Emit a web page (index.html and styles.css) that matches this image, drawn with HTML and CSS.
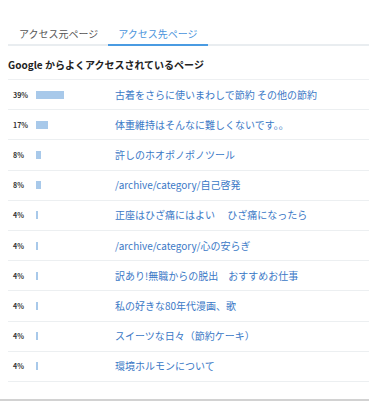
FILE: index.html
```html
<!DOCTYPE html>
<html lang="ja">
<head>
  <meta charset="UTF-8" />
  <title>アクセス先ページ</title>
  <link rel="stylesheet" href="styles.css">
</head>
<body>

  <div class="panel">
    <div class="contenido">
      <div class="tabs">
        <div class="tab">アクセス元ページ</div>
        <div class="tab activo">アクセス先ページ</div>
      </div>

      <h2 class="titulo">Google からよくアクセスされているページ</h2>

      <ul class="lista">
        <li class="fila"><span class="pct">39%</span><span class="barra-col"><span class="barra" style="width: 28px"></span></span><a href="#">古着をさらに使いまわしで節約 その他の節約</a></li>
        <li class="fila"><span class="pct">17%</span><span class="barra-col"><span class="barra" style="width: 12px"></span></span><a href="#">体重維持はそんなに難しくないです。。</a></li>
        <li class="fila"><span class="pct">8%</span><span class="barra-col"><span class="barra" style="width: 5px"></span></span><a href="#">許しのホオポノポノツール</a></li>
        <li class="fila"><span class="pct">8%</span><span class="barra-col"><span class="barra" style="width: 5px"></span></span><a href="#">/archive/category/自己啓発</a></li>
        <li class="fila"><span class="pct">4%</span><span class="barra-col"><span class="barra" style="width: 2px"></span></span><a href="#">正座はひざ痛にはよい　 ひざ痛になったら</a></li>
        <li class="fila"><span class="pct">4%</span><span class="barra-col"><span class="barra" style="width: 2px"></span></span><a href="#">/archive/category/心の安らぎ</a></li>
        <li class="fila"><span class="pct">4%</span><span class="barra-col"><span class="barra" style="width: 2px"></span></span><a href="#">訳あり!無職からの脱出　おすすめお仕事</a></li>
        <li class="fila"><span class="pct">4%</span><span class="barra-col"><span class="barra" style="width: 2px"></span></span><a href="#">私の好きな80年代漫画、歌</a></li>
        <li class="fila"><span class="pct">4%</span><span class="barra-col"><span class="barra" style="width: 2px"></span></span><a href="#">スイーツな日々（節約ケーキ）</a></li>
        <li class="fila"><span class="pct">4%</span><span class="barra-col"><span class="barra" style="width: 2px"></span></span><a href="#">環境ホルモンについて</a></li>
      </ul>
    </div>
  </div>

</body>
</html>
```

FILE: styles.css
```css
body {
  margin: 0;
  background: #ffffff;
  font-family: "Noto Sans CJK JP", "Noto Sans", sans-serif;
  color: #333;
}
.panel {
  height: 399px;
  border-bottom: 2px solid #d2d2d2;
}
.contenido {
  margin-left: 8px;
  padding-top: 24px;
}
.tabs {
  display: flex;
  border-bottom: 2px solid #e9edf0;
}
.tab {
  font-size: 10px;
  line-height: 14px;
  padding: 3px 10px 3px;
  margin-left: 1px;
  color: #555;
}
.tab.activo {
  color: #4a94dc;
  border-bottom: 2px solid #4a9be2;
  margin-bottom: -2px;
  margin-left: 0;
}
.titulo {
  margin: 0;
  font-size: 10px;
  line-height: 14px;
  font-weight: bold;
  color: #222;
  padding: 12px 0 7px;
  border-bottom: 1px solid #eef0f2;
}
.lista {
  list-style: none;
  margin: 0;
  padding: 0;
}
.fila {
  display: flex;
  align-items: center;
  height: 29.2px;
  padding-left: 5px;
  border-bottom: 1px solid #eceff1;
}
.pct {
  width: 23px;
  font-size: 7px;
  font-weight: bold;
  color: #333;
}
.barra-col {
  width: 79px;
  display: flex;
}
.barra {
  display: block;
  height: 8px;
  background: #a8c9ea;
}
.fila a {
  font-size: 10px;
  line-height: 14px;
  color: #3a78c6;
  text-decoration: none;
}
```
